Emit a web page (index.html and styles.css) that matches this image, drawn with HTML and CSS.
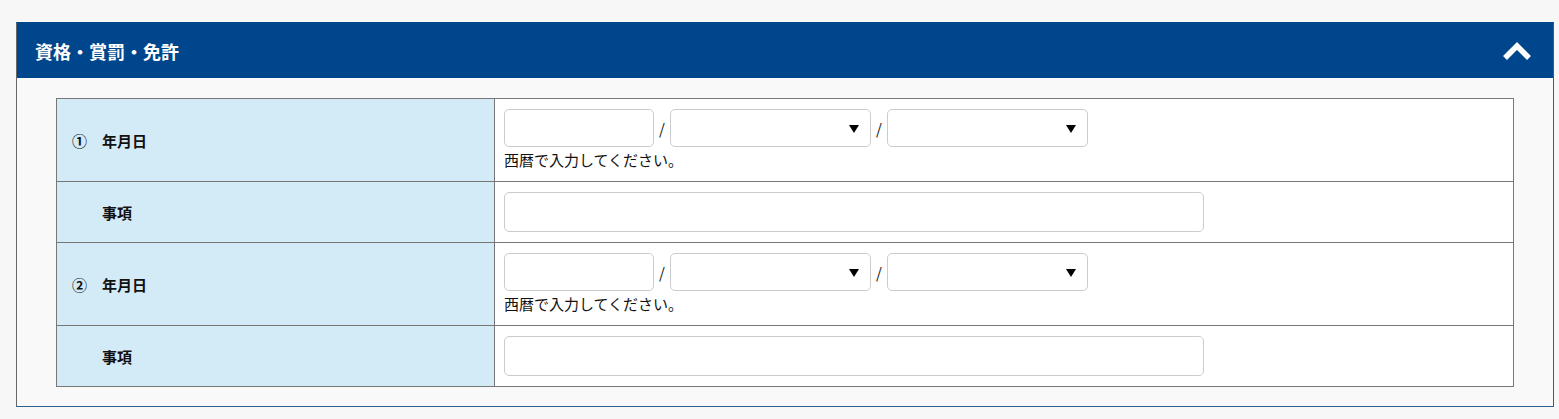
FILE: index.html
```html
<!DOCTYPE html>
<html lang="ja">
<head>
    <meta charset="UTF-8">
    <meta name="viewport" content="width=device-width, initial-scale=1.0">
    <title>資格・賞罰・免許</title>
    <link rel="stylesheet" href="styles.css">
</head>
<body>

<!-- 資格・賞罰・免許 -->
<section class="panel">
    <div class="panel-head">
        <h2>資格・賞罰・免許</h2>
        <svg class="toggle" width="30" height="20" viewBox="0 0 30 20">
            <polyline points="3,17 15,5 27,17" fill="none" stroke="#fff" stroke-width="5.5"/>
        </svg>
    </div>
    <div class="panel-body">
        <table class="form-table">
            <tr class="date-row">
                <th><span class="num">①</span>年月日</th>
                <td>
                    <div class="date-line">
                        <input type="text" class="year">
                        <span class="sep">/</span>
                        <span class="select"><select></select></span>
                        <span class="sep">/</span>
                        <span class="select"><select></select></span>
                    </div>
                    <p class="note">西暦で入力してください。</p>
                </td>
            </tr>
            <tr>
                <th><span class="num"></span>事項</th>
                <td><input type="text" class="wide"></td>
            </tr>
            <tr class="date-row">
                <th><span class="num">②</span>年月日</th>
                <td>
                    <div class="date-line">
                        <input type="text" class="year">
                        <span class="sep">/</span>
                        <span class="select"><select></select></span>
                        <span class="sep">/</span>
                        <span class="select"><select></select></span>
                    </div>
                    <p class="note">西暦で入力してください。</p>
                </td>
            </tr>
            <tr>
                <th><span class="num"></span>事項</th>
                <td><input type="text" class="wide"></td>
            </tr>
        </table>
    </div>
</section>

</body>
</html>
```

FILE: styles.css
```css
body {
    font-family: "Noto Sans CJK JP", "Noto Sans", sans-serif;
    margin: 0;
    padding: 22px 0 0 16px;
    background-color: #f7f7f7;
    color: #111;
}

/* Panel */
.panel {
    width: 1538px;
    box-sizing: border-box;
    border: 1px solid #2d5f90;
    border-left-color: #666;
    border-top-color: #00468c;
    background-color: #f9f9f9;
}

.panel-head {
    display: flex;
    align-items: center;
    justify-content: space-between;
    height: 55px;
    padding: 0 21px 0 18px;
    background-color: #00468c;
}

.panel-head h2 {
    margin: 0;
    color: #fff;
    font-size: 18px;
    font-weight: bold;
}

.toggle {
    display: block;
}

.panel-body {
    padding: 20px 39px 19px;
}

/* Table */
.form-table {
    width: 100%;
    border-collapse: collapse;
    background-color: #fff;
    font-size: 15px;
}

.form-table th,
.form-table td {
    border: 1px solid #777;
}

.form-table th {
    width: 422px;
    padding: 0 0 0 15px;
    background-color: #d3eaf7;
    text-align: left;
    font-weight: bold;
    color: #111;
}

.form-table td {
    padding: 10px 9px;
    vertical-align: top;
}

.date-row td {
    padding-bottom: 11px;
}

.num {
    display: inline-block;
    width: 30px;
}

.date-line {
    display: flex;
    align-items: center;
}

input,
select {
    box-sizing: border-box;
    border: 1px solid #ccc;
    border-radius: 5px;
    background: #fff;
    font: inherit;
    margin: 0;
}

.year {
    width: 150px;
    height: 38px;
}

.sep {
    width: 16px;
    text-align: center;
    font-size: 15px;
}

.select {
    position: relative;
    display: block;
}

.select select {
    display: block;
    width: 201px;
    height: 38px;
    appearance: none;
    -webkit-appearance: none;
}

.select::after {
    content: "";
    position: absolute;
    right: 12px;
    top: 16px;
    border-left: 5px solid transparent;
    border-right: 5px solid transparent;
    border-top: 8px solid #000;
    pointer-events: none;
}

.note {
    margin: 3px 0 0;
    line-height: 20px;
    font-size: 15px;
}

.wide {
    display: block;
    width: 700px;
    height: 40px;
}
```
